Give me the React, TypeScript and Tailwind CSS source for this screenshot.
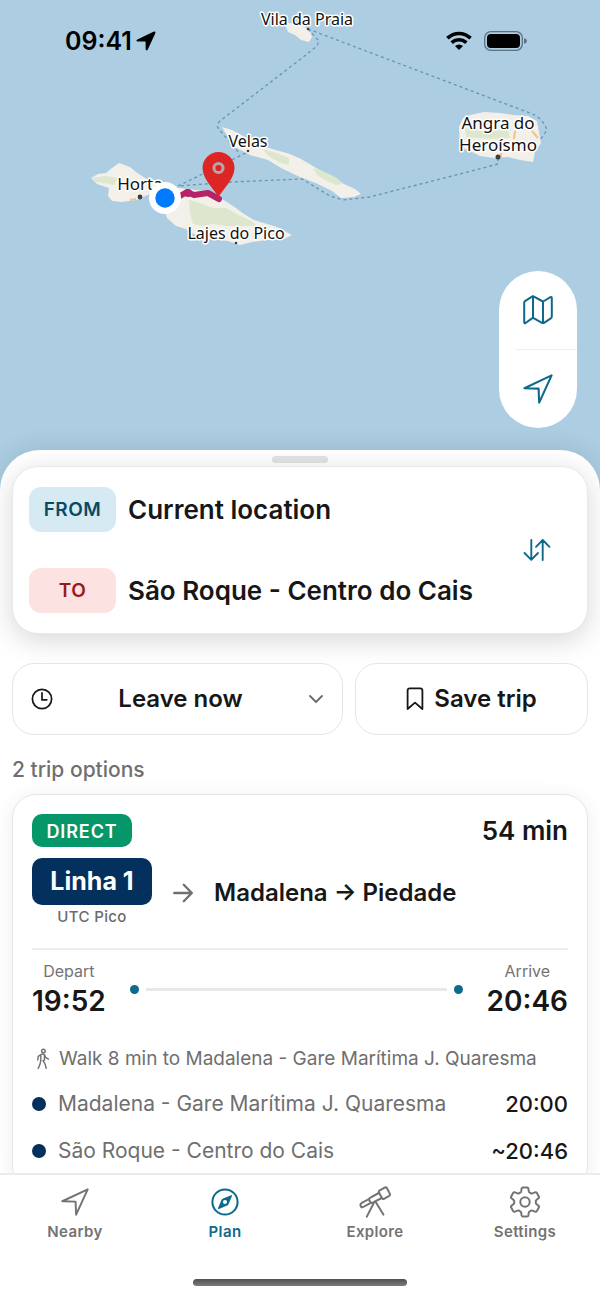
import React, { useState } from 'react';

type IconProps = { className?: string };

const MapIcon = ({ className }: IconProps) => (
  <svg viewBox="0 0 30 30" className={className} fill="none" stroke="currentColor" strokeWidth="2" strokeLinejoin="round" strokeLinecap="round" aria-hidden="true">
    <path d="M1.200 7.600Q1.200 6.600 2 6.100L9 1.600Q10 1 11 1.600L19 6Q20 6.600 21 6L27.400 2.200Q28.800 1.500 28.800 3V21.600Q28.800 22.800 27.800 23.400L21 27.800Q20 28.400 19 27.800L11 23.400Q10 22.800 9 23.400L2.600 28Q1.200 28.700 1.200 27.200Z" />
    <path d="M10 1.500V23M20 6.500V28" />
  </svg>
);

const ArrowIcon = ({ className }: IconProps) => (
  <svg viewBox="0 0 30 30" className={className} fill="none" stroke="currentColor" strokeWidth="2.100" strokeLinejoin="round" aria-hidden="true">
    <path d="M1.400 14.200L28.600 1.400L16.200 28.600L15.600 14.600Z" />
  </svg>
);

const SwapIcon = ({ className }: IconProps) => (
  <svg viewBox="0 0 28 24" className={className} fill="none" stroke="currentColor" strokeWidth="1.900" strokeLinecap="round" strokeLinejoin="round" aria-hidden="true">
    <path d="M8.300 2V21.500M1.500 15L8.300 21.800L15 15M19.700 22V2.200M13 8.800L19.700 2L26.500 8.800" />
  </svg>
);

const ClockIcon = ({ className }: IconProps) => (
  <svg viewBox="0 0 22 22" className={className} fill="none" stroke="currentColor" strokeWidth="1.700" strokeLinecap="round" aria-hidden="true">
    <circle cx="11" cy="11" r="9.600" />
    <path d="M11 4.800V11.800H15.800" />
  </svg>
);

const ChevronIcon = ({ className }: IconProps) => (
  <svg viewBox="0 0 16 16" className={className} fill="none" stroke="currentColor" strokeWidth="1.800" strokeLinecap="round" strokeLinejoin="round" aria-hidden="true">
    <path d="M2 5L8 11L14 5" />
  </svg>
);

const BookmarkIcon = ({ className }: IconProps) => (
  <svg viewBox="0 0 18 24" className={className} fill="none" stroke="currentColor" strokeWidth="1.800" strokeLinejoin="round" aria-hidden="true">
    <path d="M1.600 22V3.600Q1.600 1.400 3.800 1.400H14.200Q16.400 1.400 16.400 3.600V22L9 15.600Z" />
  </svg>
);

const RightArrowIcon = ({ className }: IconProps) => (
  <svg viewBox="0 0 20 20" className={className} fill="none" stroke="currentColor" strokeWidth="2.300" strokeLinecap="round" strokeLinejoin="round" aria-hidden="true">
    <path d="M1.200 10H18.400M10.800 1.800L18.800 10L10.800 18.200" />
  </svg>
);

const WalkIcon = ({ className }: IconProps) => (
  <svg viewBox="0 0 14 22" className={className} fill="none" stroke="currentColor" strokeWidth="1.400" strokeLinecap="round" strokeLinejoin="round" aria-hidden="true">
    <circle cx="7.400" cy="3" r="1.800" />
    <path d="M5.400 6.400Q7 5.400 8.400 6.600L9.600 9.400L12.400 11.200M5.400 6.400L2.200 8.400L1.800 12M4.800 7.800V12.600L3.800 16.800L2.200 20.400M8.400 7.400V12.200L7 12.600L9 16L10.200 20.400" />
  </svg>
);

const CompassIcon = ({ className }: IconProps) => (
  <svg viewBox="0 0 30 30" className={className} aria-hidden="true">
    <circle cx="15" cy="15" r="11.800" fill="none" stroke="currentColor" strokeWidth="1.900" />
    <path fillRule="evenodd" fill="currentColor" d="M20.800 8.600Q22 8.200 21.500 9.400L18.400 16.800Q18 17.800 17 18.300L9.400 21.500Q8 22 8.500 20.600L11.700 13.200Q12.200 12.200 13.200 11.800ZM15 13.100A1.900 1.900 0 1 0 15 16.900A1.900 1.900 0 1 0 15 13.100Z" />
  </svg>
);

const TelescopeIcon = ({ className }: IconProps) => (
  <svg viewBox="0 0 32 32" className={className} fill="none" stroke="currentColor" strokeWidth="2" strokeLinecap="round" strokeLinejoin="round" aria-hidden="true">
    <path d="M20.400 4.600L25.600 1.600Q27.200 0.900 28 2.200L30.800 7.600Q31.400 9 30.200 9.800L25 12.800Q23.800 13.400 23 12L20 6.800Q19.400 5.400 20.400 4.600Z" />
    <path d="M19.800 7L11 11.800Q9.400 12.600 10.200 14L11.200 16Q12 17.400 13.600 16.600L22.800 12M9.900 13L2.400 17.200Q1 18.200 1.600 19.600L2 20.600Q2.800 21.800 4.200 21L11.800 16.800" />
    <path d="M14.800 17L7.800 30.600M17 16.400L24.400 28.600" />
  </svg>
);

const GearIcon = ({ className }: IconProps) => (
  <svg viewBox="0 0 32 32" className={className} fill="none" stroke="currentColor" strokeWidth="2" strokeLinejoin="round" aria-hidden="true">
    <path d="M12.600 2.600Q12.800 1.400 14 1.400H18Q19.200 1.400 19.400 2.600L19.800 5.400Q20 6.200 20.800 6.600L22 7.300Q22.700 7.700 23.500 7.400L26 6.400Q27.200 5.900 27.900 7L29.800 10.400Q30.400 11.500 29.500 12.300L27.400 14Q26.800 14.500 26.800 15.300V16.700Q26.800 17.500 27.400 18L29.500 19.700Q30.400 20.500 29.800 21.600L27.900 25Q27.200 26.100 26 25.600L23.500 24.600Q22.700 24.300 22 24.700L20.800 25.400Q20 25.800 19.800 26.600L19.400 29.400Q19.200 30.600 18 30.600H14Q12.800 30.600 12.600 29.400L12.200 26.600Q12 25.800 11.200 25.400L10 24.700Q9.300 24.300 8.500 24.600L6 25.600Q4.800 26.100 4.100 25L2.200 21.600Q1.600 20.500 2.500 19.700L4.600 18Q5.200 17.500 5.200 16.700V15.300Q5.200 14.500 4.600 14L2.500 12.300Q1.600 11.500 2.200 10.400L4.100 7Q4.800 5.900 6 6.400L8.500 7.400Q9.300 7.700 10 7.300L11.200 6.600Q12 6.200 12.200 5.400Z" />
    <circle cx="16" cy="16" r="4.700" />
  </svg>
);

// Central Azores with the ferry lines and the selected trip
const IslandMap = () => (
  <svg viewBox="0 0 600 500" preserveAspectRatio="xMidYMin slice" className="block h-[500px] w-full bg-[#accde2]" role="img" aria-label="Map of the trip">
    <g fill="#f3f0ea">
      <path d="M284 22L300 25L309 29L312 37L309 42L301 40L295 35L288 32Z" />
      <path d="M91 178L98 174L106 173L112 168L119 163L130 167L136 172L145 178L156 184L150 194L136 200L122 202L112 201L108 196L109 188L97 184Z" />
      <path d="M160 196L172 187L187 189L205 191L222 199L233 206L244 214L254 220L277 227L292 235L284 239L267 240L252 242L240 245L228 241L212 239L200 238L186 229L176 226L167 218L164 208Z" />
      <path d="M222 127L232 130L245 137L258 145L276 150L290 154L301 159L318 169L332 176L344 184L355 189L361 194L354 197L341 198L332 191L318 184L300 177L281 168L268 160L250 155L235 147L229 139Z" />
      <path d="M459 127L463 118L470 115L484 112L500 113L514 115L528 116L537 121L539 132L541 143L535 152L533 162L520 160L508 157L494 158L480 156L470 151L460 147Z" />
    </g>
    <g fill="#dde7cd">
      <path d="M92 178L105 176L118 178L114 185L104 183L96 182Z" />
      <path d="M189 200L200 203L213 208L226 208L235 213L251 221L258 226L240 226L226 226L213 224L202 226L193 224L190 213Z" />
      <path d="M262 149L274 152L289 158L289 165L280 163L270 157Z" />
      <path d="M313 168L327 173L337 178L343 184L336 185L325 180L317 175Z" />
      <path d="M465 128L480 131L508 130L510 138L490 139L466 137Z" />
    </g>
    <g fill="none" stroke="#f3c28b" strokeWidth="2">
      <path d="M515 131L514 139M532 131L538 138M130 200L136 199M501 153V157" />
    </g>
    <g fill="none" stroke="#6396b3" strokeWidth="1.300" strokeDasharray="3 3">
      <path d="M308 29L319 41L317 46L302 58L220 121Q216 125 218 128L240 154" />
      <path d="M308 29L535 115Q544 121 547 130L541 139" />
      <path d="M498 158V164L440 179L370 197L343 200L330 196L302 179L232 182L178 186L248 152" />
    </g>
    <g fill="#3c4043">
      <circle cx="308" cy="29" r="1.300" />
      <circle cx="140" cy="197" r="2.400" />
      <circle cx="248" cy="151" r="1.300" />
      <circle cx="236" cy="243" r="1.300" />
      <circle cx="498" cy="157" r="2.500" />
    </g>
    <g fill="#111" stroke="#fff" strokeWidth="3" strokeLinejoin="round" paintOrder="stroke" textAnchor="middle" fontSize="16" fontFamily="'Noto Sans', sans-serif">
      <text x="307" y="25">Vila da Praia</text>
      <text x="248" y="147">Velas</text>
      <text x="498" y="129" fontSize="17">Angra do</text>
      <text x="498" y="151" fontSize="17">Heroísmo</text>
      <text x="140" y="190" fontSize="17">Horta</text>
      <text x="236" y="239">Lajes do Pico</text>
    </g>
    <path d="M180 196L187 192L194 195L208 193L219 199" fill="none" stroke="#b72368" strokeWidth="6" strokeLinecap="round" strokeLinejoin="round" />
    <circle cx="188" cy="193" r="4" fill="#b72368" />
    <path d="M218.500 197C214 189 202.500 179 202.500 168A16 16 0 0 1 234.500 168C234.500 179 223 189 218.500 197Z" fill="#dc2626" />
    <circle cx="218.500" cy="168" r="4.600" fill="none" stroke="#b9a5a5" strokeWidth="3" />
    <circle cx="165" cy="198" r="16" fill="#fff" />
    <circle cx="165" cy="198" r="9.700" fill="#007aff" />
  </svg>
);

const StatusBar = () => (
  <div className="absolute inset-x-0 top-0 flex items-center justify-between pt-[26px] pr-[73px] pl-[65px] text-black">
    <div className="flex items-center gap-1">
      <span className="text-[25px] leading-[30px] font-semibold">09:41</span>
      <svg viewBox="0 0 20 20" className="size-5" aria-hidden="true">
        <path d="M1.400 8.600L17.400 0.800Q20 -0.100 19.200 2.600L11.800 18.600Q10.200 20.600 9.600 18V11Q9.600 10.400 9 10.400H2Q-0.800 10 1.400 8.600Z" fill="currentColor" />
      </svg>
    </div>
    <div className="flex items-center gap-3">
      <svg viewBox="0 0 26 20" className="h-5 w-[26px]" fill="none" stroke="currentColor" strokeWidth="3.600" aria-hidden="true">
        <path d="M1.400 7.200Q6.600 2.500 13 2.500T24.600 7.200M5.600 11.600Q9 8.700 13 8.700T20.400 11.600" />
        <path d="M13 19L9 15Q13 11.800 17 15Z" fill="currentColor" stroke="none" />
      </svg>
      <svg viewBox="0 0 43 20" className="h-5 w-[43px]" aria-hidden="true">
        <rect x="0.700" y="0.700" width="37.600" height="18.600" rx="6" fill="none" stroke="#5d7280" strokeWidth="1.300" />
        <rect x="3" y="3" width="33" height="14" rx="4" fill="currentColor" />
        <path d="M40 7Q43 8 43 10T40 13Z" fill="#5d7280" />
      </svg>
    </div>
  </div>
);

const stops = [
  { name: 'Madalena - Gare Marítima J. Quaresma', time: '20:00' },
  { name: 'São Roque - Centro do Cais', time: '~20:46' },
];

const tabs = [
  { label: 'Nearby', icon: ArrowIcon, size: 'size-7' },
  { label: 'Plan', icon: CompassIcon, size: 'size-8' },
  { label: 'Explore', icon: TelescopeIcon, size: 'size-8' },
  { label: 'Settings', icon: GearIcon, size: 'size-8' },
];

const SearchCard = () => (
  <section className="mt-[3px] flex items-center rounded-[26px] border border-[#e9e9e9] bg-white py-5 pr-8 pl-4 shadow-[0_6px_28px_rgba(0,0,0,0.16)]">
    <div className="flex min-w-0 flex-1 flex-col gap-9">
      <button className="flex items-center gap-3 text-left">
        <span className="flex h-[45px] w-[87px] items-center justify-center rounded-xl bg-[#d6eaf4] pt-px text-[19px] font-semibold tracking-wide text-[#0b4a63]">FROM</span>
        <span className="truncate text-[26px] leading-8 font-semibold">Current location</span>
      </button>
      <button className="flex items-center gap-3 text-left">
        <span className="flex h-[45px] w-[87px] items-center justify-center rounded-xl bg-[#fde2e2] pt-px text-[19px] font-semibold tracking-wide text-[#991b1b]">TO</span>
        <span className="truncate text-[26px] leading-8 font-semibold">São Roque - Centro do Cais</span>
      </button>
    </div>
    <button aria-label="Swap origin and destination" className="p-1 text-[#0e6a8c]">
      <SwapIcon className="h-6 w-7" />
    </button>
  </section>
);

const TripCard = () => (
  <article className="mt-[10px] rounded-3xl border border-[#e6e6e6] bg-white px-[19px] pt-[19px] pb-6 shadow-[0_2px_20px_rgba(0,0,0,0.07)]">
    <div className="flex items-center justify-between">
      <span className="flex h-[33px] w-[100px] items-center justify-center rounded-[10px] bg-[#059669] pt-px text-[18px] font-semibold tracking-wider text-white">DIRECT</span>
      <span className="text-[26px] leading-8 font-semibold">54 min</span>
    </div>

    <div className="mt-[11px] flex items-center">
      <div className="flex w-[120px] flex-col items-center gap-[2px]">
        <span className="flex h-[47px] w-full items-center justify-center rounded-[10px] bg-[#03305c] text-[25px] font-bold text-white">Linha 1</span>
        <span className="text-[15px] leading-5 font-medium tracking-wide text-[#6b6b6b]">UTC Pico</span>
      </div>
      <RightArrowIcon className="ml-[21px] size-5 text-[#6f6f6f]" />
      <h3 className="ml-[21px] text-[24px] leading-8 font-semibold">Madalena → Piedade</h3>
    </div>

    <div className="mt-[21px] flex items-center justify-between border-t-2 border-[#ececec] pt-[11px]">
      <div className="flex flex-col items-center gap-1">
        <span className="text-[16px] leading-5 text-[#737373]">Depart</span>
        <time className="text-[28px] leading-8 font-semibold">19:52</time>
      </div>
      <div className="mx-6 flex flex-1 items-center gap-[7px]">
        <span className="size-[9px] rounded-full bg-[#0e6a8c]" />
        <span className="h-[3px] flex-1 bg-[#e8e8e8]" />
        <span className="size-[9px] rounded-full bg-[#0e6a8c]" />
      </div>
      <div className="flex flex-col items-center gap-1">
        <span className="text-[16px] leading-5 text-[#737373]">Arrive</span>
        <time className="text-[28px] leading-8 font-semibold">20:46</time>
      </div>
    </div>

    <p className="mt-7 flex items-center text-[19px] leading-7 text-[#6f6f6f]">
      <WalkIcon className="mr-2 ml-[3px] h-[22px] w-4 shrink-0" />
      <span className="truncate">Walk 8 min to Madalena - Gare Marítima J. Quaresma</span>
    </p>

    <ul className="mt-[17px] flex flex-col gap-[19px]">
      {stops.map((stop) => (
        <li key={stop.name} className="flex items-center text-[21px] leading-7">
          <span className="mr-3 size-[14px] shrink-0 rounded-full bg-[#03305c]" />
          <span className="min-w-0 flex-1 truncate text-[#6f6f6f]">{stop.name}</span>
          <time className="text-[22px] font-medium">{stop.time}</time>
        </li>
      ))}
    </ul>
  </article>
);

const App: React.FC = () => {
  const [activeTab, setActiveTab] = useState('Plan');

  return (
    <div className="flex h-screen flex-col overflow-hidden bg-white font-['Inter',sans-serif] text-[#171717]">
      <header className="relative shrink-0">
        <IslandMap />
        <StatusBar />
        <div className="absolute top-[271px] right-[23px] flex w-[78px] flex-col rounded-full bg-white text-[#0e6a8c]">
          <button aria-label="Map layers" className="flex h-[78px] items-center justify-center">
            <MapIcon className="size-[30px]" />
          </button>
          <span className="ml-4 h-px bg-[#efefef]" />
          <button aria-label="My location" className="flex h-[78px] items-center justify-center">
            <ArrowIcon className="size-[30px]" />
          </button>
        </div>
      </header>

      <main className="relative -mt-[50px] min-h-0 flex-1 overflow-y-auto rounded-t-[40px] bg-white px-3 pt-[6px] shadow-[0_-2px_24px_rgba(0,0,0,0.1)] [scrollbar-width:none]">
        <div className="mx-auto h-[7px] w-14 rounded-full bg-[#e3e3e3]" />
        <SearchCard />

        <div className="mt-[29px] flex gap-3">
          <label className="flex h-[72px] min-w-0 flex-1 items-center rounded-[22px] border border-[#e5e5e5] bg-white px-[18px]">
            <ClockIcon className="size-[22px] shrink-0" />
            <select aria-label="Departure time" className="min-w-0 flex-1 appearance-none bg-transparent text-center text-[24px] font-semibold [text-align-last:center]">
              <option>Leave now</option>
              <option>Depart at</option>
              <option>Arrive by</option>
            </select>
            <ChevronIcon className="size-4 shrink-0 text-[#6b6b6b]" />
          </label>
          <button className="flex h-[72px] w-[233px] items-center justify-center gap-[10px] rounded-[22px] border border-[#e5e5e5] bg-white text-[24px] font-semibold">
            <BookmarkIcon className="h-6 w-[18px]" />
            Save trip
          </button>
        </div>

        <h2 className="mt-[21px] text-[21px] leading-7 font-medium text-[#6f6f6f]">2 trip options</h2>
        <TripCard />
      </main>

      <footer className="relative shrink-0 border-t-2 border-[#ebebeb] bg-white pb-3">
        <nav className="flex pt-[11px]">
          {tabs.map(({ label, icon: Icon, size }) => (
            <button
              key={label}
              onClick={() => setActiveTab(label)}
              className={`flex flex-1 flex-col items-center gap-1 ${activeTab === label ? 'text-[#0e6a8c]' : 'text-[#737373]'}`}
            >
              <span className="flex size-8 items-center justify-center">
                <Icon className={size} />
              </span>
              <span className="text-[15px] leading-5 font-semibold tracking-wide">{label}</span>
            </button>
          ))}
        </nav>
        <div className="mx-auto mt-[37px] h-[7px] w-[214px] rounded-full bg-linear-to-b from-[#505050] to-[#7c7c7c]" />
      </footer>
    </div>
  );
};

export default App;
